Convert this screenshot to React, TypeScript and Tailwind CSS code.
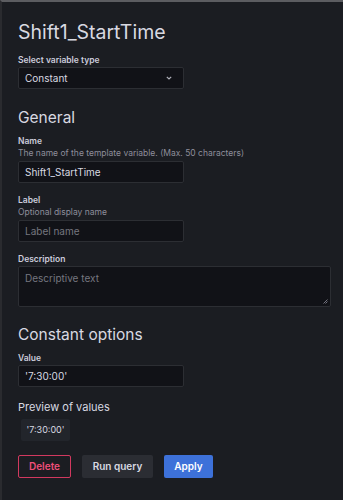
import React from 'react';

function Field({ label, hint, children }: { label: string; hint?: string; children: React.ReactNode }) {
  return (
    <div className="flex flex-col">
      <span className="text-[8.5px] font-semibold leading-[12px] text-[#ccccdc]">{label}</span>
      {hint && <span className="text-[8.5px] leading-[12px] text-[#8e8e9b]">{hint}</span>}
      <div className={hint ? 'mt-[2px]' : 'mt-[1px]'}>{children}</div>
    </div>
  );
}

function Input({ value, placeholder }: { value?: string; placeholder?: string }) {
  return (
    <div className="w-[166px] h-[22px] rounded-[2px] border border-[#2c2e33] bg-[#111217] px-[6px] flex items-center text-[10px]">
      {value ? <span className="text-[#d8d9e1]">{value}</span> : <span className="text-[#75767f]">{placeholder}</span>}
    </div>
  );
}

export default function App() {
  return (
    <div
      className="w-[343px] h-[500px] bg-[#1b1d22] border-t-2 border-l-2 border-t-[#5c5d61] border-l-[#2a2b2f] pl-[16px] pr-[10px] pt-[18px] text-[#ccccdc]"
      style={{ fontFamily: 'Inter, "Noto Sans", sans-serif' }}
    >
      <h1 className="text-[19.5px] leading-[24px] text-[#d8d9e1]">Shift1_StartTime</h1>

      <div className="mt-[10px]">
        <Field label="Select variable type">
          <div className="w-[166px] h-[22px] rounded-[2px] border border-[#2c2e33] bg-[#111217] px-[6px] flex items-center justify-between text-[10px]">
            <span className="text-[#d8d9e1]">Constant</span>
            <svg width="8" height="6" viewBox="0 0 8 6" className="mr-[4px]">
              <path d="M1.8 1.8 L4 4 L6.2 1.8" fill="none" stroke="#b0b1ba" strokeWidth="1.2" />
            </svg>
          </div>
        </Field>
      </div>

      <h2 className="mt-[19px] text-[15.5px] leading-[20px] text-[#d8d9e1]">General</h2>

      <div className="mt-[7px] flex flex-col gap-[11px]">
        <Field label="Name" hint="The name of the template variable. (Max. 50 characters)">
          <Input value="Shift1_StartTime" />
        </Field>
        <Field label="Label" hint="Optional display name">
          <Input placeholder="Label name" />
        </Field>
        <Field label="Description">
          <div className="relative w-[313px] h-[41px] rounded-[2px] border border-[#2c2e33] bg-[#111217] px-[6px] pt-[4px] text-[10px] text-[#75767f]">
            Descriptive text
            <svg width="5" height="5" viewBox="0 0 5 5" className="absolute right-[2px] bottom-[2px]">
              <path d="M4.5 0.5 L0.5 4.5 M4.5 2.5 L2.5 4.5" stroke="#8e8e9b" strokeWidth="0.8" />
            </svg>
          </div>
        </Field>
      </div>

      <h2 className="mt-[18px] text-[15.5px] leading-[20px] text-[#d8d9e1]">Constant options</h2>

      <div className="mt-[7px]">
        <Field label="Value">
          <Input value="'7:30:00'" />
        </Field>
      </div>

      <div className="mt-[13px] text-[11px] leading-[14px] text-[#d8d9e1]">Preview of values</div>
      <div className="mt-[5px] ml-[3px] flex w-[49px] h-[22px] items-center justify-center rounded-[2px] bg-[#22252b] text-[9px] text-[#d8d9e1]">
        '7:30:00'
      </div>

      <div className="mt-[14px] flex gap-[11px]">
        <button className="h-[23px] w-[53px] rounded-[2px] border border-[#d1395f] bg-[#1b1d22] text-[10px] font-semibold text-[#f04f7a]">
          Delete
        </button>
        <button className="h-[23px] w-[71px] rounded-[2px] bg-[#2b2d33] text-[10px] font-semibold text-[#d8d9e1]">
          Run query
        </button>
        <button className="h-[23px] w-[49px] rounded-[2px] bg-[#3d71d9] text-[10px] font-semibold text-white">
          Apply
        </button>
      </div>
    </div>
  );
}
